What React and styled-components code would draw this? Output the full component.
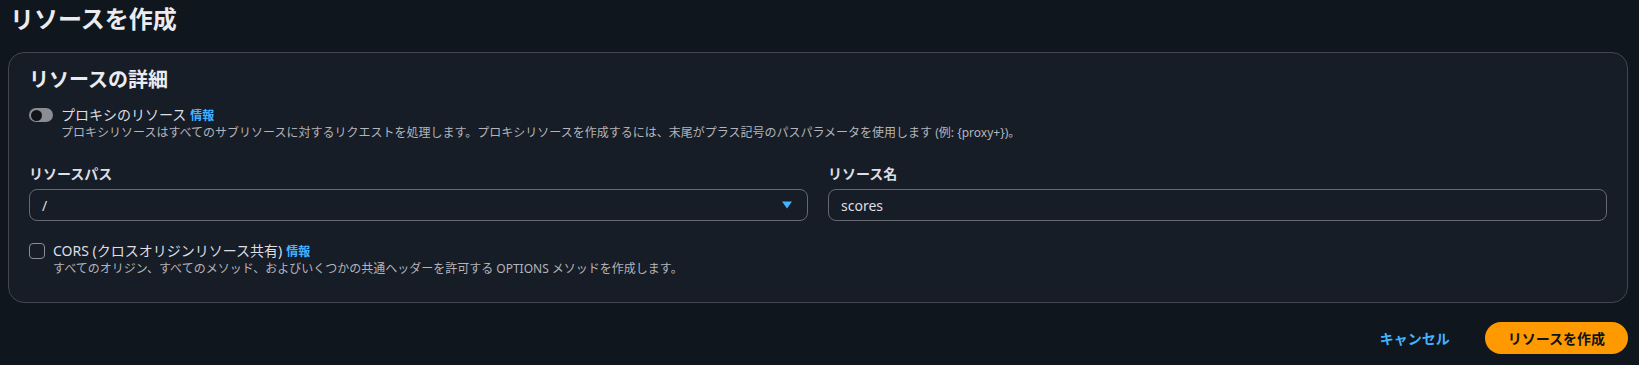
import React from 'react'
import styled, { createGlobalStyle } from 'styled-components';

const GlobalStyle = createGlobalStyle`
  html, body {
    margin: 0;
    padding: 0;
    background-color: #10161d;
  }
  body {
    font-family: "Noto Sans", "Noto Sans CJK JP", sans-serif;
    color: #dedee3;
  }
`

const Page = styled.main`
  width: 1639px;
  height: 365px;
  box-sizing: border-box;
  padding: 2px 11px 0 8px;
  display: flex;
  flex-direction: column;
  overflow: hidden;
`

const PageTitle = styled.h1`
  margin: 0 0 0 2px;
  font-size: 24px;
  line-height: 34px;
  font-weight: 700;
  color: #ebebf0;
`

const Card = styled.section`
  margin-top: 16px;
  background-color: #161d26;
  border: 1px solid #424650;
  border-radius: 16px;
  padding: 12px 20px 25px 20px;
  display: flex;
  flex-direction: column;
`

const CardTitle = styled.h2`
  margin: 0;
  font-size: 20px;
  line-height: 30px;
  font-weight: 700;
  color: #ebebf0;
`

const OptionRow = styled.div`
  display: flex;
  align-items: flex-start;
  gap: 8px;
  margin-top: ${p => p.$top}px;
`

const ToggleTrack = styled.span`
  flex: none;
  width: 24px;
  height: 14px;
  margin-top: 3px;
  border-radius: 8px;
  background-color: #8c8c94;
  display: flex;
  align-items: center;
  padding: 0 2px;
  box-sizing: border-box;
`

const ToggleKnob = styled.span`
  width: 11px;
  height: 11px;
  border-radius: 50%;
  background-color: #0f141a;
`

const CheckBox = styled.span`
  flex: none;
  width: 14px;
  height: 14px;
  margin-top: 2px;
  border: 1px solid #8c8c94;
  border-radius: 4px;
`

const OptionText = styled.div`
  display: flex;
  flex-direction: column;
`

const OptionLabel = styled.span`
  font-size: 14px;
  line-height: 19px;
  color: #dedee3;
`

const InfoLink = styled.a`
  font-size: 12px;
  font-weight: 700;
  color: #42b4ff;
  margin-left: 4px;
`

const Description = styled.span`
  font-size: 12px;
  line-height: 16px;
  color: #b4b4bb;
`

const FieldGrid = styled.div`
  display: grid;
  grid-template-columns: 1fr 1fr;
  gap: 20px;
  margin-top: 24px;
`

const Field = styled.div`
  display: flex;
  flex-direction: column;
  gap: 6px;
`

const FieldLabel = styled.label`
  font-size: 14px;
  line-height: 18px;
  font-weight: 700;
  color: #dedee3;
`

const InputBox = styled.div`
  height: 32px;
  box-sizing: border-box;
  border: 1px solid #656871;
  border-radius: 8px;
  padding: 0 14px 0 12px;
  display: flex;
  align-items: center;
  justify-content: space-between;
  font-size: 14px;
  color: #dedee3;
`

const Footer = styled.div`
  display: flex;
  justify-content: flex-end;
  align-items: center;
  gap: 35px;
  margin-top: 19px;
`

const LinkButton = styled.button`
  background: none;
  border: none;
  padding: 0;
  font-family: inherit;
  font-size: 14px;
  font-weight: 700;
  color: #42b4ff;
`

const PrimaryButton = styled.button`
  height: 32px;
  padding: 0 23px;
  border: none;
  border-radius: 16px;
  background-color: #ff9900;
  color: #0f141a;
  font-family: inherit;
  font-size: 14px;
  font-weight: 700;
`

const Caret = () => (
  <svg width="12" height="8" viewBox="0 0 12 8">
    <path d="M1 0.5 L11 0.5 L6 7.5 Z" fill="#42b4ff" />
  </svg>
)

const App = () => {
  return (
    <Page>
      <GlobalStyle />
      <PageTitle>リソースを作成</PageTitle>
      <Card>
        <CardTitle>リソースの詳細</CardTitle>

        <OptionRow $top={10}>
          <ToggleTrack><ToggleKnob /></ToggleTrack>
          <OptionText>
            <OptionLabel>プロキシのリソース<InfoLink>情報</InfoLink></OptionLabel>
            <Description>プロキシリソースはすべてのサブリソースに対するリクエストを処理します。プロキシリソースを作成するには、末尾がプラス記号のパスパラメータを使用します (例: {'{proxy+}'})。</Description>
          </OptionText>
        </OptionRow>

        <FieldGrid>
          <Field>
            <FieldLabel>リソースパス</FieldLabel>
            <InputBox>
              <span>/</span>
              <Caret />
            </InputBox>
          </Field>
          <Field>
            <FieldLabel>リソース名</FieldLabel>
            <InputBox>scores</InputBox>
          </Field>
        </FieldGrid>

        <OptionRow $top={20}>
          <CheckBox />
          <OptionText>
            <OptionLabel>CORS (クロスオリジンリソース共有)<InfoLink>情報</InfoLink></OptionLabel>
            <Description>すべてのオリジン、すべてのメソッド、およびいくつかの共通ヘッダーを許可する OPTIONS メソッドを作成します。</Description>
          </OptionText>
        </OptionRow>
      </Card>

      <Footer>
        <LinkButton>キャンセル</LinkButton>
        <PrimaryButton>リソースを作成</PrimaryButton>
      </Footer>
    </Page>
  )
}

export default App;
